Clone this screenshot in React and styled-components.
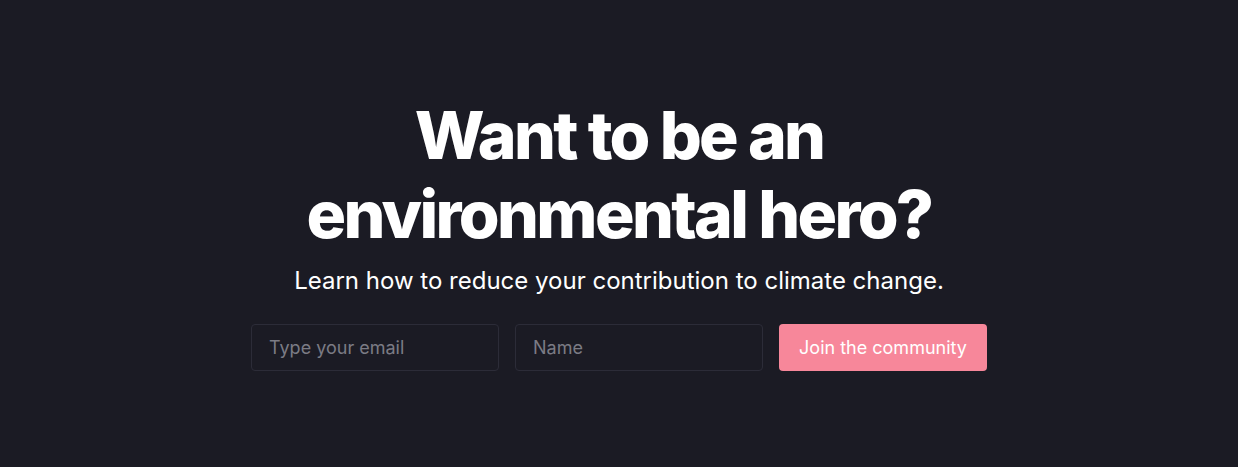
import React from "react";
import styled, { createGlobalStyle } from "styled-components";

const Global = createGlobalStyle`
  html, body { margin: 0; padding: 0; background: #1b1b24; }
  body { font-family: Inter, "Noto Sans", sans-serif; -webkit-font-smoothing: antialiased; }
`;

const Section = styled.section`
  height: 467px;
  box-sizing: border-box;
  display: flex;
  flex-direction: column;
  align-items: center;
  padding-top: 96px;
  background: #1b1b24;
  color: #ffffff;
`;

const Title = styled.h1`
  margin: 0;
  font-size: 66px;
  line-height: 79px;
  font-weight: 800;
  letter-spacing: -0.04em;
  text-align: center;
  width: 640px;
`;

const Subtitle = styled.p`
  margin: 11px 0 0;
  font-size: 24px;
  line-height: 32px;
  font-weight: 400;
  text-align: center;
`;

const Form = styled.form`
  display: flex;
  gap: 16px;
  margin-top: 27px;
`;

const Input = styled.input`
  box-sizing: border-box;
  width: 248px;
  height: 47px;
  padding: 0 17px;
  background: #1b1b24;
  border: 1px solid #2c2c38;
  border-radius: 4px;
  color: #fff;
  font-family: inherit;
  font-size: 18px;
  outline: none;
  &::placeholder { color: #7b7b85; }
`;

const Button = styled.button`
  box-sizing: border-box;
  width: 208px;
  height: 47px;
  border: none;
  border-radius: 4px;
  background: #f7879a;
  color: #fff;
  font-family: inherit;
  font-size: 18px;
  font-weight: 400;
  cursor: pointer;
`;

export default function App() {
  return (
    <>
      <Global />
      <Section>
        <Title>Want to be an environmental hero?</Title>
        <Subtitle>Learn how to reduce your contribution to climate change.</Subtitle>
        <Form onSubmit={(e) => e.preventDefault()}>
          <Input type="email" placeholder="Type your email" />
          <Input type="text" placeholder="Name" />
          <Button type="submit">Join the community</Button>
        </Form>
      </Section>
    </>
  );
}
